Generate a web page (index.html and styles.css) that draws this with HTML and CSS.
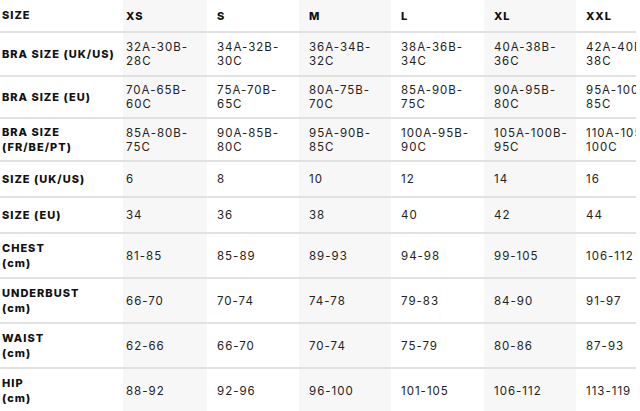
FILE: index.html
```html
<!DOCTYPE html>
<html lang="en">
<head>
<meta charset="utf-8">
<title>Size guide</title>
<link rel="stylesheet" href="styles.css">
</head>
<body>
<div class="wrap">
  <div class="chart">
    <div class="row r33">
      <div class="cell label">SIZE</div>
      <div class="cell head g first">XS</div>
      <div class="cell head">S</div>
      <div class="cell head g">M</div>
      <div class="cell head">L</div>
      <div class="cell head g">XL</div>
      <div class="cell head">XXL</div>
    </div>
    <div class="row r44">
      <div class="cell label">BRA SIZE (UK/US)</div>
      <div class="cell val g first">32A-30B-<br>28C</div>
      <div class="cell val">34A-32B-<br>30C</div>
      <div class="cell val g">36A-34B-<br>32C</div>
      <div class="cell val">38A-36B-<br>34C</div>
      <div class="cell val g">40A-38B-<br>36C</div>
      <div class="cell val">42A-40B-<br>38C</div>
    </div>
    <div class="row r42">
      <div class="cell label">BRA SIZE (EU)</div>
      <div class="cell val g first">70A-65B-<br>60C</div>
      <div class="cell val">75A-70B-<br>65C</div>
      <div class="cell val g">80A-75B-<br>70C</div>
      <div class="cell val">85A-90B-<br>75C</div>
      <div class="cell val g">90A-95B-<br>80C</div>
      <div class="cell val">95A-100B-<br>85C</div>
    </div>
    <div class="row r43">
      <div class="cell label">BRA SIZE<br>(FR/BE/PT)</div>
      <div class="cell val g first">85A-80B-<br>75C</div>
      <div class="cell val">90A-85B-<br>80C</div>
      <div class="cell val g">95A-90B-<br>85C</div>
      <div class="cell val">100A-95B-<br>90C</div>
      <div class="cell val g">105A-100B-<br>95C</div>
      <div class="cell val">110A-105B-<br>100C</div>
    </div>
    <div class="row r36">
      <div class="cell label">SIZE (UK/US)</div>
      <div class="cell val g first">6</div>
      <div class="cell val">8</div>
      <div class="cell val g">10</div>
      <div class="cell val">12</div>
      <div class="cell val g">14</div>
      <div class="cell val">16</div>
    </div>
    <div class="row r36">
      <div class="cell label">SIZE (EU)</div>
      <div class="cell val g first">34</div>
      <div class="cell val">36</div>
      <div class="cell val g">38</div>
      <div class="cell val">40</div>
      <div class="cell val g">42</div>
      <div class="cell val">44</div>
    </div>
    <div class="row r45">
      <div class="cell label">CHEST<br>(cm)</div>
      <div class="cell val g first">81-85</div>
      <div class="cell val">85-89</div>
      <div class="cell val g">89-93</div>
      <div class="cell val">94-98</div>
      <div class="cell val g">99-105</div>
      <div class="cell val">106-112</div>
    </div>
    <div class="row r45">
      <div class="cell label">UNDERBUST<br>(cm)</div>
      <div class="cell val g first">66-70</div>
      <div class="cell val">70-74</div>
      <div class="cell val g">74-78</div>
      <div class="cell val">79-83</div>
      <div class="cell val g">84-90</div>
      <div class="cell val">91-97</div>
    </div>
    <div class="row r45">
      <div class="cell label">WAIST<br>(cm)</div>
      <div class="cell val g first">62-66</div>
      <div class="cell val">66-70</div>
      <div class="cell val g">70-74</div>
      <div class="cell val">75-79</div>
      <div class="cell val g">80-86</div>
      <div class="cell val">87-93</div>
    </div>
    <div class="row r45">
      <div class="cell label">HIP<br>(cm)</div>
      <div class="cell val g first">88-92</div>
      <div class="cell val">92-96</div>
      <div class="cell val g">96-100</div>
      <div class="cell val">101-105</div>
      <div class="cell val g">106-112</div>
      <div class="cell val">113-119</div>
    </div>
  </div>
</div>
</body>
</html>
```
FILE: styles.css
```css
html, body {
  margin: 0;
  padding: 0;
  background: #ffffff;
}

body {
  font-family: "Inter", "Noto Sans", sans-serif;
  color: #1a1a1a;
}

.wrap {
  width: 636px;
  overflow: hidden;
}

.chart {
  width: 668px;
}

.row {
  display: grid;
  grid-template-columns: 123px 84px 92px 92px 93px 92px 92px;
  border-bottom: 2px solid #e1e1e1;
  box-sizing: border-box;
}

.r33 { height: 33px; }
.r36 { height: 36px; }
.r42 { height: 42px; }
.r43 { height: 43px; }
.r44 { height: 44px; }
.r45 { height: 45px; }

.cell {
  display: flex;
  align-items: center;
  padding-left: 10px;
  white-space: nowrap;
  box-sizing: border-box;
}

.cell.first {
  padding-left: 3px;
}

.g {
  background: #f7f7f7;
}

.label {
  padding-left: 2px;
  font-size: 11px;
  font-weight: 800;
  letter-spacing: 1px;
  line-height: 15px;
  color: #111111;
}

.head {
  font-size: 11px;
  font-weight: 800;
  letter-spacing: 1px;
  color: #111111;
}

.val {
  font-size: 11.5px;
  font-weight: 400;
  letter-spacing: 1px;
  line-height: 14px;
  color: #222222;
}
```
